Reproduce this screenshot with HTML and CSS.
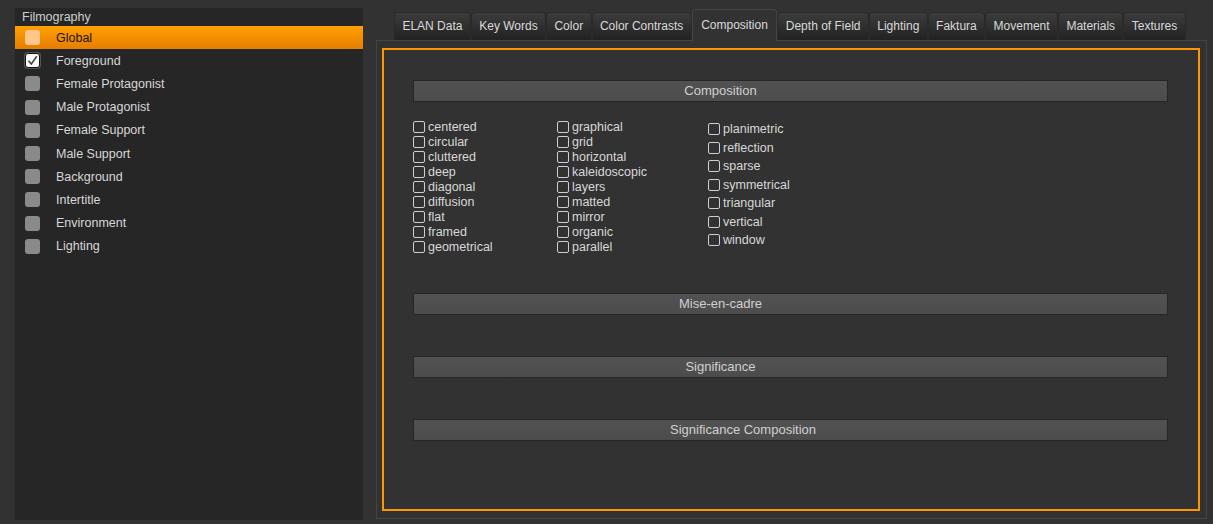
FILE: index.html
```html
<!DOCTYPE html>
<html>
<head>
<meta charset="utf-8">
<link rel="stylesheet" href="styles.css">
</head>
<body>
<div class="app">
  <aside class="side">
    <div class="side-title">Filmography</div>
    <ul class="layers">
      <li class="layer active"><span class="lbox"></span><span>Global</span></li>
      <li class="layer"><span class="lbox checked"><svg viewBox="0 0 13 13" width="13" height="13"><path d="M2.5 6.8 L5.3 10 L10.8 2.2" fill="none" stroke="#444" stroke-width="1.6"/></svg></span><span>Foreground</span></li>
      <li class="layer"><span class="lbox"></span><span>Female Protagonist</span></li>
      <li class="layer"><span class="lbox"></span><span>Male Protagonist</span></li>
      <li class="layer"><span class="lbox"></span><span>Female Support</span></li>
      <li class="layer"><span class="lbox"></span><span>Male Support</span></li>
      <li class="layer"><span class="lbox"></span><span>Background</span></li>
      <li class="layer"><span class="lbox"></span><span>Intertitle</span></li>
      <li class="layer"><span class="lbox"></span><span>Environment</span></li>
      <li class="layer"><span class="lbox"></span><span>Lighting</span></li>
    </ul>
  </aside>
  <main class="main">
    <nav class="tabs">
      <div class="tab">ELAN Data</div>
      <div class="tab">Key Words</div>
      <div class="tab">Color</div>
      <div class="tab">Color Contrasts</div>
      <div class="tab selected">Composition</div>
      <div class="tab">Depth of Field</div>
      <div class="tab">Lighting</div>
      <div class="tab">Faktura</div>
      <div class="tab">Movement</div>
      <div class="tab">Materials</div>
      <div class="tab">Textures</div>
    </nav>
    <section class="pane">
      <div class="focus">
        <div class="bar">Composition</div>
        <div class="checks">
          <div class="col col1">
            <label class="cb"><span class="box"></span>centered</label>
            <label class="cb"><span class="box"></span>circular</label>
            <label class="cb"><span class="box"></span>cluttered</label>
            <label class="cb"><span class="box"></span>deep</label>
            <label class="cb"><span class="box"></span>diagonal</label>
            <label class="cb"><span class="box"></span>diffusion</label>
            <label class="cb"><span class="box"></span>flat</label>
            <label class="cb"><span class="box"></span>framed</label>
            <label class="cb"><span class="box"></span>geometrical</label>
          </div>
          <div class="col col2">
            <label class="cb"><span class="box"></span>graphical</label>
            <label class="cb"><span class="box"></span>grid</label>
            <label class="cb"><span class="box"></span>horizontal</label>
            <label class="cb"><span class="box"></span>kaleidoscopic</label>
            <label class="cb"><span class="box"></span>layers</label>
            <label class="cb"><span class="box"></span>matted</label>
            <label class="cb"><span class="box"></span>mirror</label>
            <label class="cb"><span class="box"></span>organic</label>
            <label class="cb"><span class="box"></span>parallel</label>
          </div>
          <div class="col col3">
            <label class="cb"><span class="box"></span>planimetric</label>
            <label class="cb"><span class="box"></span>reflection</label>
            <label class="cb"><span class="box"></span>sparse</label>
            <label class="cb"><span class="box"></span>symmetrical</label>
            <label class="cb"><span class="box"></span>triangular</label>
            <label class="cb"><span class="box"></span>vertical</label>
            <label class="cb"><span class="box"></span>window</label>
          </div>
        </div>
        <div class="bar">Mise-en-cadre</div>
        <div class="bar">Significance</div>
        <div class="bar wide">Significance Composition</div>
      </div>
    </section>
  </main>
</div>
</body>
</html>
```
FILE: styles.css
```css
* { box-sizing: border-box; }
html, body { margin: 0; padding: 0; }
body {
  background: #323232;
  font-family: "Liberation Sans", Arial, sans-serif;
  font-size: 13px;
  color: #d4d4d4;
  width: 1213px;
  height: 524px;
  overflow: hidden;
}
.app {
  display: flex;
  gap: 13px;
  padding: 8px 6px 4px 15px;
  height: 524px;
}
.side {
  width: 348px;
  height: 512px;
  background: #262626;
  flex: none;
}
.side-title {
  height: 18px;
  line-height: 18px;
  padding-left: 7px;
  font-size: 12.5px;
  color: #cfcfcf;
}
.layers { list-style: none; margin: 0; padding: 0; }
.layer {
  height: 23.2px;
  display: flex;
  align-items: center;
  padding-left: 10px;
  gap: 16px;
  font-size: 12.5px;
  color: #d8d8d8;
}
.layer.active {
  background: linear-gradient(#ffa000, #e67e00);
  color: #1b1100;
}
.lbox {
  width: 15px;
  height: 15px;
  border-radius: 3px;
  background: #8a8a8a;
  flex: none;
  display: flex;
  align-items: center;
  justify-content: center;
}
.layer.active .lbox { background: #ffc78c; }
.lbox.checked {
  background: #fafafa;
  border: 1px solid #111;
  box-shadow: 0 0 0 1px #555;
}
.main {
  width: 831px;
  flex: none;
  min-width: 0;
  display: flex;
  flex-direction: column;
}
.tabs {
  display: flex;
  align-items: flex-end;
  height: 32px;
  padding-left: 18px;
}
.tab {
  height: 28px;
  line-height: 27px;
  padding: 0 7.4px;
  font-size: 12px;
  border: 1px solid #2a2a2a;
  border-bottom: none;
  border-radius: 4px 4px 0 0;
  background: linear-gradient(#3c3c3c, #222);
  color: #dadada;
  white-space: nowrap;
}
.tab.selected {
  height: 32px;
  line-height: 30px;
  background: #323232;
  border-color: #454545;
  padding: 0 8.5px;
  position: relative;
  z-index: 1;
  margin-bottom: -1px;
}
.pane {
  height: 479px;
  border: 1px solid #444;
  padding: 7px 6px 7px 5px;
}
.focus {
  height: 100%;
  border: 2px solid #ff9500;
  padding: 30px 30px 0 29px;
  display: flex;
  flex-direction: column;
}
.bar {
  height: 22px;
  line-height: 20px;
  background: linear-gradient(#525252, #4c4c4c);
  border: 1px solid #262626;
  text-align: center;
  padding-right: 140px;
  color: #d0d0d0;
  margin-bottom: 41px;
}
.bar.wide { padding-right: 95px; }
.bar:first-child { margin-bottom: 17px; }
.checks {
  display: flex;
  margin-bottom: 39px;
  font-size: 12.5px;
}
.col { display: flex; flex-direction: column; }
.col1 { width: 144px; }
.col2 { width: 151px; }
.col3 { padding-top: 1px; }
.cb {
  height: 15px;
  display: flex;
  align-items: center;
  gap: 3px;
  color: #d8d8d8;
}
.col3 .cb { height: 18.5px; }
.box {
  width: 12px;
  height: 12px;
  border: 1px solid #cfcfcf;
  border-radius: 2px;
  flex: none;
}
```
